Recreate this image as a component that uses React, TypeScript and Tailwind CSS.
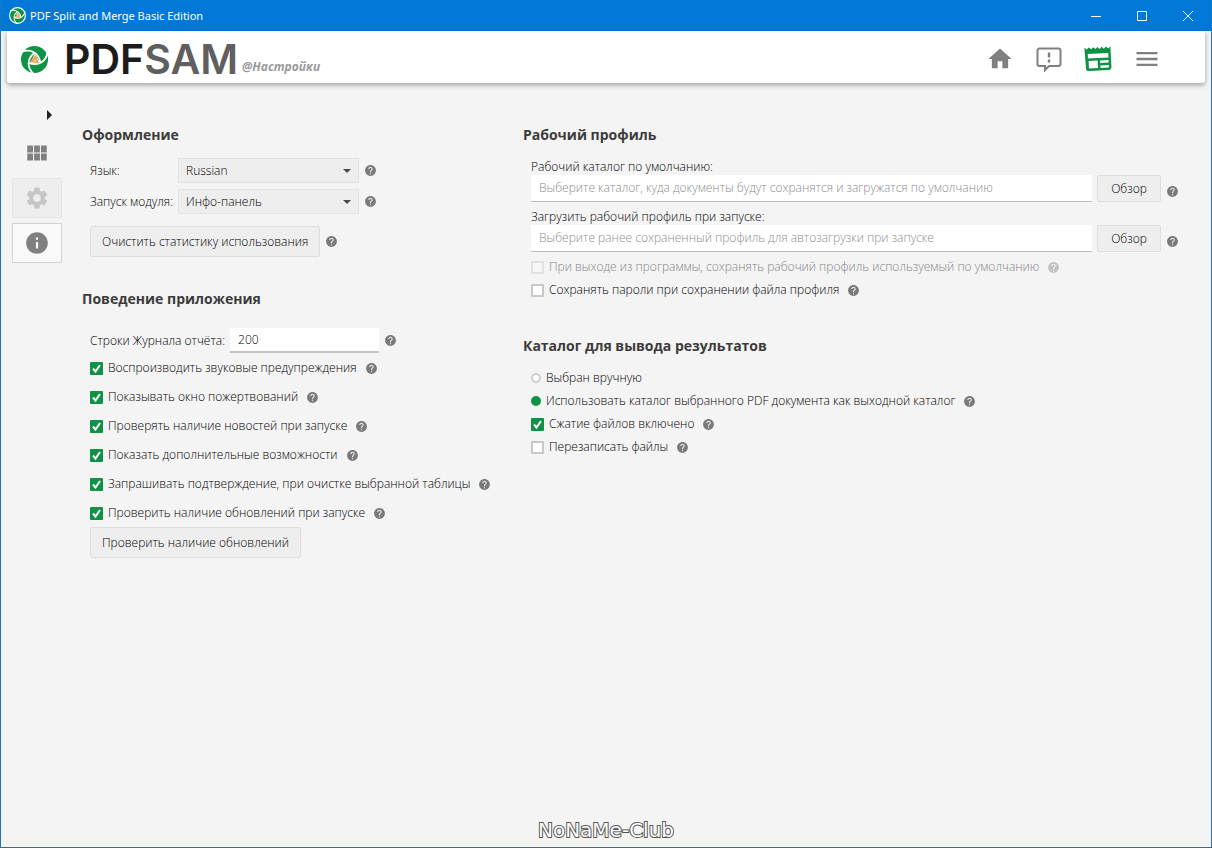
import { useState } from 'react';
import type { ReactNode } from 'react';
import { MdHome, MdInfo, MdSettings, MdMenu, MdViewModule, MdHelp } from 'react-icons/md';

const Help = ({ faded = false }: { faded?: boolean }) => (
  <MdHelp className={`size-[13px] shrink-0 ${faded ? 'text-[#c4c4c4]' : 'text-[#7a7a7a]'}`} aria-hidden="true" />
);

const Swirl = ({ className, ring = false }: { className: string; ring?: boolean }) => (
  <svg viewBox="0 0 30 30" className={className} aria-hidden="true">
    <circle cx="15" cy="15" r="14" fill="#0f9246" stroke={ring ? '#fff' : 'none'} strokeWidth="2" />
    <path d="M15.500 8.500l5 9.500-10.500 2z" fill="#fff" />
    {[0, 120, 240].map((a) => (
      <path
        key={a}
        transform={`rotate(${a} 15 15)`}
        d="M2 7C10 4 19 7 21 18"
        fill="none"
        stroke="#fff"
        strokeWidth="1.800"
      />
    ))}
    <path d="M16 10l3.500 9-9-1.500z" fill="#f0a04b" />
    <path d="M15.600 14.500l.9 2.200h-2z" fill="#fff" />
  </svg>
);

const Heading = ({ children }: { children: ReactNode }) => (
  <h2 className="text-[14px] leading-5 font-bold text-[#3c3c3c]">{children}</h2>
);

type CheckProps = { id: string; label: string; checked?: boolean; disabled?: boolean; help?: boolean };

const Check = ({ id, label, checked = false, disabled = false, help = true }: CheckProps) => {
  const [on, setOn] = useState(checked);
  return (
    <div className="flex items-center">
      <span className="relative flex size-[13px] shrink-0">
        <input
          id={id}
          type="checkbox"
          checked={on}
          disabled={disabled}
          onChange={() => setOn(!on)}
          className="size-[13px] appearance-none rounded-[1px] border-2 border-[#c8c8c8] bg-white checked:border-[#0f9246] checked:bg-[#0f9246] disabled:border-[#e2e2e2] disabled:bg-[#f7f7f7]"
        />
        {on && (
          <svg viewBox="0 0 13 13" className="pointer-events-none absolute inset-0 size-[13px]">
            <path d="M3 6.500l2.500 3 4.500-6.500" fill="none" stroke="#fff" strokeWidth="2" />
          </svg>
        )}
      </span>
      <label htmlFor={id} className={`ml-[5px] mr-2 ${disabled ? 'text-[#858585]' : ''}`}>
        {label}
      </label>
      {help && <Help faded={disabled} />}
    </div>
  );
};

const Radio = ({ id, label, checked = false, help = false }: CheckProps) => (
  <div className="flex items-center">
    <input
      id={id}
      name="output"
      type="radio"
      defaultChecked={checked}
      className="size-[10px] appearance-none rounded-full border-2 border-[#cfcfcf] bg-white checked:border-[#0f9246] checked:bg-[#0f9246]"
    />
    <label htmlFor={id} className="ml-[5px] mr-2">
      {label}
    </label>
    {help && <Help />}
  </div>
);

const Combo = ({ id, label, options }: { id: string; label: string; options: string[] }) => (
  <div className="flex items-center">
    <label htmlFor={id} className="w-[88px]">
      {label}
    </label>
    <div className="relative mr-[5px] w-[181px]">
      <select
        id={id}
        className="block h-[25px] w-full appearance-none border border-[#e2e2e2] bg-[#eeeeee] pl-[7px]"
      >
        {options.map((o) => (
          <option key={o}>{o}</option>
        ))}
      </select>
      <svg viewBox="0 0 8 4" className="pointer-events-none absolute top-[11px] right-2 h-1 w-2">
        <path d="M0 0h8L4 4z" fill="#4a4a4a" />
      </svg>
    </div>
    <Help />
  </div>
);

const Button = ({ children, className }: { children: ReactNode; className: string }) => (
  <button className={`rounded-[2px] border border-[#dedede] bg-[#eeeeee] hover:bg-[#e6e6e6] ${className}`}>{children}</button>
);

const PathField = ({ id, label, placeholder }: { id: string; label: string; placeholder: string }) => (
  <div>
    <label htmlFor={id} className="block h-4 leading-4">
      {label}
    </label>
    <div className="flex h-[27px] items-stretch">
      <input
        id={id}
        placeholder={placeholder}
        className="min-w-0 flex-1 border-b border-[#bdbdbd] bg-white px-2 outline-none placeholder:text-[#8c8c8c]"
      />
      <Button className="ml-[5px] mr-[5px] w-16">Обзор</Button>
      <span className="flex items-end pb-1">
        <Help />
      </span>
    </div>
  </div>
);

const behaviour = [
  'Воспроизводить звуковые предупреждения',
  'Показывать окно пожертвований',
  'Проверять наличие новостей при запуске',
  'Показать дополнительные возможности',
  'Запрашивать подтверждение, при очистке выбранной таблицы',
  'Проверить наличие обновлений при запуске',
];

const TitleBar = () => (
  <header className="flex h-[31px] items-center bg-[#0078d7] pl-2 text-white">
    <Swirl className="size-[17px]" ring />
    <span className="ml-1 font-['Noto_Sans',sans-serif] text-[11px] font-normal">PDF Split and Merge Basic Edition</span>
    <div className="ml-auto flex h-full">
      <button aria-label="Свернуть" className="flex w-[46px] items-center justify-center">
        <svg viewBox="0 0 10 10" className="size-[10px]">
          <path d="M0 5.500h10" stroke="#fff" />
        </svg>
      </button>
      <button aria-label="Развернуть" className="flex w-[46px] items-center justify-center">
        <svg viewBox="0 0 10 10" className="size-[10px]">
          <path d="M.5.5h9v9h-9z" fill="none" stroke="#fff" />
        </svg>
      </button>
      <button aria-label="Закрыть" className="flex w-[46px] items-center justify-center">
        <svg viewBox="0 0 10 10" className="size-[10px]">
          <path d="M0 0l10 10M10 0L0 10" stroke="#fff" />
        </svg>
      </button>
    </div>
  </header>
);

const TopBar = () => (
  <div className="mx-[6px] flex h-[52px] items-center rounded-b-[3px] bg-white pt-1 pl-[13px] pr-[44px] shadow-[0_2px_5px_rgba(0,0,0,0.35)]">
    <Swirl className="size-[29px]" />
    <h1 className="ml-[15px] flex items-end">
      <span className="font-['Inter',sans-serif] text-[41px] leading-[48px] font-semibold text-[#1c1c1c]">
        PDF<span className="text-[#5f5f5f]">SAM</span>
      </span>
      <span className="ml-1 pb-2 text-[12px] leading-4 font-bold text-[#999999] italic">@Настройки</span>
    </h1>
    <nav className="ml-auto flex items-center gap-[21px] text-[#808080]">
      <button aria-label="Главная">
        <MdHome className="size-7" />
      </button>
      <button aria-label="Сообщения">
        <svg viewBox="0 0 28 28" className="size-7">
          <path d="M4.500 3.500h19a2 2 0 0 1 2 2v13.500a2 2 0 0 1-2 2h-9.500l-4 4v-4h-5.500a2 2 0 0 1-2-2V5.500a2 2 0 0 1 2-2z" fill="none" stroke="currentColor" strokeWidth="2" />
          <path d="M14 7.500v5M14 14.500v3" stroke="currentColor" strokeWidth="2.400" />
        </svg>
      </button>
      <button aria-label="Новости" className="text-[#0f9246]">
        <svg viewBox="0 0 28 28" className="size-7">
          <path
            transform="rotate(-3 14 14)"
            d="M1 2l2.200 2 2.200-2 2.200 2 2.200-2L12 4l2-2 2 2 2.200-2 2.200 2 2.200-2 2.200 2L27 2v20.500a3 3 0 0 1-3 3H4.500a3 3 0 0 1-3-3zM4 8.500V13h20.500V8.500zM4.500 15.500v7.500h9v-7.500zM16 15.500V18h8.500v-2.500zM16 20.500V23h8.500v-2.500z"
            fill="currentColor"
            fillRule="evenodd"
          />
        </svg>
      </button>
      <button aria-label="Меню">
        <MdMenu className="size-7" />
      </button>
    </nav>
  </div>
);

const SideBar = () => (
  <aside className="flex w-[50px] flex-col pt-[27px] text-[#808080]">
    <button aria-label="Развернуть панель" className="mr-[10px] self-end">
      <svg viewBox="0 0 5 10" className="h-[10px] w-[5px]">
        <path d="M0 0l5 5-5 5z" fill="#222" />
      </svg>
    </button>
    <nav className="mt-[13px] flex flex-col gap-[5px]">
      <button aria-label="Модули" className="flex h-10 items-center justify-center">
        <MdViewModule className="size-[26px]" />
      </button>
      <button
        aria-label="Настройки"
        className="flex h-10 items-center justify-center border border-[#e4e4e4] bg-[#eeeeee] text-[#c6c6c6]"
      >
        <MdSettings className="size-[26px]" />
      </button>
      <button aria-label="О программе" className="flex h-10 items-center justify-center border border-[#d2d2d2] bg-[#f9f9f9]">
        <MdInfo className="size-[26px]" />
      </button>
    </nav>
  </aside>
);

const App = () => {
  return (
    <div className="flex min-h-screen flex-col border-x border-b border-[#1976b8] bg-[#f4f4f4] font-['Open_Sans',sans-serif] text-[12px] leading-4 font-light text-black">
      <TitleBar />
      <TopBar />
      <div className="flex flex-1 pl-[11px]">
        <SideBar />
        <main className="flex flex-1 pt-[42px] pl-[20px] pr-[32px]">
          <div className="w-[441px] shrink-0">
            <section>
              <Heading>Оформление</Heading>
              <div className="mt-[13px] flex flex-col items-start gap-[6px] pl-2">
                <Combo id="lang" label="Язык:" options={['Russian', 'English']} />
                <Combo id="start" label="Запуск модуля:" options={['Инфо-панель']} />
                <div className="mt-[6px] flex items-center gap-[5px]">
                  <Button className="h-[31px] px-[11px]">Очистить статистику использования</Button>
                  <Help />
                </div>
              </div>
            </section>
            <section className="mt-8">
              <Heading>Поведение приложения</Heading>
              <div className="mt-[19px] pl-2">
                <div className="flex items-center">
                  <label htmlFor="rows">Строки Журнала отчёта:</label>
                  <input
                    id="rows"
                    defaultValue="200"
                    className="ml-[5px] mr-[5px] h-[25px] w-[149px] border-b-2 border-[#c4c4c4] bg-white px-2 outline-none"
                  />
                  <Help />
                </div>
                <div className="mt-[7px] flex flex-col gap-[13px]">
                  {behaviour.map((b, i) => (
                    <Check key={b} id={`behaviour-${i}`} label={b} checked />
                  ))}
                </div>
                <Button className="mt-[6px] h-[31px] px-[11px]">Проверить наличие обновлений</Button>
              </div>
            </section>
          </div>
          <div className="min-w-0 flex-1">
            <section>
              <Heading>Рабочий профиль</Heading>
              <div className="mt-[14px] flex flex-col gap-[7px] pl-2">
                <PathField
                  id="workdir"
                  label="Рабочий каталог по умолчанию:"
                  placeholder="Выберите каталог, куда документы будут сохранятся и загружатся по умолчанию"
                />
                <PathField
                  id="workspace"
                  label="Загрузить рабочий профиль при запуске:"
                  placeholder="Выберите ранее сохраненный профиль для автозагрузки при запуске"
                />
                <Check
                  id="save-exit"
                  label="При выходе из программы, сохранять рабочий профиль используемый по умолчанию"
                  disabled
                />
                <Check id="passwords" label="Сохранять пароли при сохранении файла профиля" />
              </div>
            </section>
            <section className="mt-[38px]">
              <Heading>Каталог для вывода результатов</Heading>
              <div className="mt-[14px] flex flex-col gap-[7px] pl-2">
                <Radio id="manual" label="Выбран вручную" />
                <Radio id="same" label="Использовать каталог выбранного PDF документа как выходной каталог" checked help />
                <Check id="compress" label="Сжатие файлов включено" checked />
                <Check id="overwrite" label="Перезаписать файлы" />
              </div>
            </section>
          </div>
        </main>
      </div>
      <footer className="flex justify-center pb-[7px] font-['DejaVu_Sans',sans-serif] text-[20px] leading-5 font-normal text-white [-webkit-text-stroke:2px_#555] [paint-order:stroke_fill]">
        NoNaMe-Club
      </footer>
    </div>
  );
};

export default App;
